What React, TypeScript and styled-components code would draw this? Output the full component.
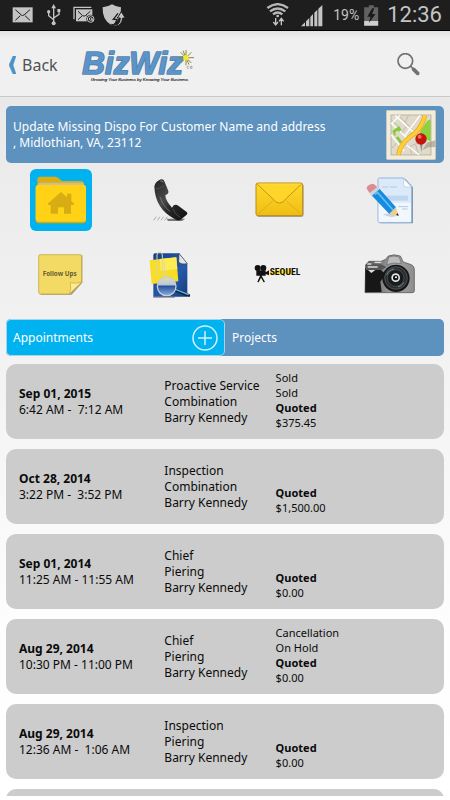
import React from "react";
import styled, { createGlobalStyle } from "styled-components";

const GlobalStyle = createGlobalStyle`
  * { box-sizing: border-box; }
  body { margin: 0; background: #fff; font-family: "Noto Sans", "Open Sans", sans-serif; color: #0a0a0a; }
  button { font: inherit; color: inherit; background: none; border: 0; padding: 0; margin: 0; cursor: pointer; }
  svg { display: block; }
`;

const Screen = styled.div`
  display: flex;
  flex-direction: column;
  height: 100vh;
  padding-bottom: 4px;
  overflow: hidden;
`;

const StatusBar = styled.header`
  display: flex;
  align-items: center;
  justify-content: space-between;
  flex: none;
  height: 31px;
  padding: 0 8px 0 12px;
  background: #1e1e1e;
  border-bottom: 1px solid #000;
  color: #c4c4c4;
  font-family: Roboto, sans-serif;
`;

const StatusGroup = styled.div`
  display: flex;
  align-items: center;
  gap: 5px;
`;

const Percent = styled.span`
  font-size: 14px;
  line-height: 20px;
  margin-left: 5px;
`;

const Clock = styled.span`
  font-size: 22px;
  line-height: 30px;
  margin-left: 3px;
`;

const AppBar = styled.nav`
  display: flex;
  align-items: center;
  flex: none;
  height: 66px;
  padding: 2px 30px 0 9px;
  background: linear-gradient(#e2e2e2, #f0f0f0 8px);
  border-bottom: 1px solid #c8c8c8;
`;

const BackButton = styled.button`
  display: flex;
  align-items: center;
  gap: 6px;
  font-size: 16px;
  line-height: 24px;
  color: #505050;
`;

const LogoBox = styled.div`
  flex: 1;
  padding-left: 23px;
`;

const Content = styled.main`
  display: flex;
  flex-direction: column;
  flex: 1;
  min-height: 0;
  padding: 9px 6px 0 6px;
  background: linear-gradient(#e9e9e9, #f0f0f0 28%, #f6f6f6 50%, #fdfdfd 75%, #fff);
`;

const AddressBar = styled.section`
  display: flex;
  align-items: center;
  justify-content: space-between;
  flex: none;
  height: 57px;
  padding: 0 8px 0 7px;
  border-radius: 5px;
  background: #5d91be;
  color: #fff;
`;

const Address = styled.p`
  margin: 0;
  font-size: 12px;
  line-height: 16px;
`;

const IconGrid = styled.div`
  display: grid;
  grid-template-columns: repeat(4, 1fr);
  grid-auto-rows: 74px;
  flex: none;
  padding-bottom: 8px;
`;

const GridCell = styled.div`
  display: flex;
  align-items: center;
  justify-content: center;
`;

const IconButton = styled.button<{ $active?: boolean }>`
  display: flex;
  align-items: center;
  justify-content: center;
  width: 62px;
  height: 62px;
  border-radius: 6px;
  background: ${(p) => (p.$active ? "#00b3f0" : "transparent")};
`;

const Tabs = styled.div`
  display: grid;
  grid-template-columns: 1fr 1fr;
  flex: none;
  height: 37px;
  border-radius: 5px;
  background: #5d91be;
  color: #fff;
  font-size: 12px;
`;

const Tab = styled.div<{ $active?: boolean }>`
  display: flex;
  align-items: center;
  padding: 0 6px;
  border: 1px solid ${(p) => (p.$active ? "#a4d4ea" : "transparent")};
  border-radius: 5px;
  background: ${(p) => (p.$active ? "#00b3f0" : "transparent")};
`;

const TabButton = styled.button`
  flex: 1;
  align-self: stretch;
  text-align: left;
`;

const List = styled.ul`
  flex: 1;
  min-height: 0;
  margin: 8px 0 0;
  padding: 0;
  list-style: none;
  overflow-y: auto;
  scrollbar-width: none;
`;

const Card = styled.li`
  display: grid;
  grid-template-columns: 145fr 111fr 168fr;
  align-items: center;
  height: 75px;
  margin-bottom: 10px;
  padding-left: 13px;
  border-radius: 10px;
  background: #ccc;
`;

const Lines = styled.div<{ $small?: boolean }>`
  font-size: ${(p) => (p.$small ? 11 : 12)}px;
  line-height: ${(p) => (p.$small ? 15 : 16)}px;
  padding-bottom: ${(p) => (p.$small ? 3 : 0)}px;
  white-space: pre;
`;

const Line = styled.div<{ $bold?: boolean }>`
  min-height: 15px;
  font-weight: ${(p) => (p.$bold ? 700 : 400)};
`;

const StatusLeftIcons = () => (
  <svg width="114" height="23" viewBox="34 14 342 69" aria-hidden="true">
    <rect x="36" y="24" width="60" height="45" fill="#c4c4c4" />
    <path d="M44 31l18 16q4 3 8 0l18-16M44 63l15-14M88 63L73 49" fill="none" stroke="#1e1e1e" strokeWidth="3" />
    <path d="M159 22v50M159 61l-15-12V38M159 56l16-11V36" stroke="#c4c4c4" strokeWidth="4" fill="none" />
    <path d="M159 14l7 13h-14z" fill="#c4c4c4" />
    <circle cx="159" cy="72" r="6" fill="#c4c4c4" />
    <circle cx="144" cy="37" r="5" fill="#c4c4c4" />
    <rect x="170" y="29" width="9" height="9" fill="#c4c4c4" />
    <path d="M220 60V24h52" fill="none" stroke="#c4c4c4" strokeWidth="4" />
    <rect x="226" y="30" width="49" height="36" fill="#c4c4c4" />
    <path d="M232 36l14 13q4 3 8 0l15-13M232 61l12-11M262 53l-5-4" fill="none" stroke="#1e1e1e" strokeWidth="3" />
    <circle cx="270" cy="59" r="13" fill="#1e1e1e" />
    <circle cx="270" cy="59" r="10" fill="none" stroke="#c4c4c4" strokeWidth="3" />
    <circle cx="270" cy="59" r="4" fill="none" stroke="#c4c4c4" strokeWidth="3" />
    <path d="M274 57v6h5" fill="none" stroke="#c4c4c4" strokeWidth="3" />
    <path d="M334 15q-13 8-28 9-2 39 27 54 30-15 28-54-15-1-27-9z" fill="#c4c4c4" />
    <path d="M338 76h11q10-4 10-20h-9l12-19 12 19h-8q-2 21-20 24-11 0-14-5z" fill="#c4c4c4" stroke="#1e1e1e" strokeWidth="3" />
    <path d="M352 42l-14 18h11l-6 14" fill="none" stroke="#1e1e1e" strokeWidth="4" />
  </svg>
);

const WifiSignal = () => (
  <svg width="57" height="24" viewBox="129 11 171 72" aria-hidden="true">
    <path d="M133 26q31-23 62 0M141 36q23-17 46 0M150 45q14-11 28 0" fill="none" stroke="#b8b8b8" strokeWidth="7" />
    <circle cx="164" cy="50" r="4" fill="#c4c4c4" />
    <path d="M158 56v20M151 68l7 9 7-9M175 78V58M168 66l7-9 7 9" fill="none" stroke="#c4c4c4" strokeWidth="4" />
    <path d="M234 81l12-12v12zM249 66l10-10v25h-10zM262 53l8-9v37h-8zM274 40l9-9v50h-9zM286 28l12-11v64h-12z" fill="#c4c4c4" />
  </svg>
);

const Battery = () => (
  <svg width="15" height="21" viewBox="420 14 44 63" aria-hidden="true">
    <path d="M434 15h15v6h13v55h-42V21h14z" fill="#626262" />
    <rect x="420" y="62" width="42" height="14" fill="#d0d0d0" />
    <path d="M444 24l-15 25h10l-5 19 20-27h-10l6-17z" fill="#1a1a1a" />
  </svg>
);

const Chevron = () => (
  <svg width="7" height="18" viewBox="0 0 7 18" aria-hidden="true">
    <path d="M7 0H4L0 9l4 9h3L4 9z" fill="#4b92c8" stroke="#4b92c8" strokeWidth="0.5" />
  </svg>
);

const Logo = () => (
  <svg width="118" height="36" viewBox="242 138 354 108" role="img" aria-label="BizWiz">
    <g fontFamily="Liberation Sans, Arial, sans-serif" fontStyle="italic">
      <text x="246" y="219" fontSize="94" fontWeight="700" fill="#5b94c8" stroke="#567fa8" strokeWidth="5" strokeLinejoin="round" paintOrder="stroke">BizWiz</text>
      <text x="272" y="240" fontSize="13" fill="#333" stroke="#333" strokeWidth="0.5">Growing Your Business by Knowing Your Business</text>
    </g>
    <path d="M557 147v46M535 170h46M541 154l32 32M573 154l-32 32M548 149l18 42" stroke="#8b8a35" strokeWidth="3" />
    <circle cx="557" cy="170" r="8" fill="#f8e52c" />
    <path d="M565 196q-5-2-5 3t5 3M570 196h5v6h-5z" fill="none" stroke="#888" strokeWidth="2" />
  </svg>
);

const SearchIcon = () => (
  <svg width="23" height="23" viewBox="518 164 69 69" aria-hidden="true">
    <circle cx="543" cy="188" r="22" fill="none" stroke="#717171" strokeWidth="5" />
    <path d="M559 204l7 7" stroke="#717171" strokeWidth="5" />
    <path d="M568 213l12 12" stroke="#717171" strokeWidth="11" strokeLinecap="round" />
  </svg>
);

const MapIcon = () => (
  <svg width="50" height="50" viewBox="483 30 150 150" aria-hidden="true">
    <rect x="484" y="31" width="148" height="148" rx="4" fill="#f1ecdc" stroke="#cdc6b0" strokeWidth="2" />
    <rect x="498" y="45" width="120" height="120" fill="#e0dacb" stroke="#a9a294" strokeWidth="2" />
    <path d="M617 58v66l-38-16q11-24 27-45z" fill="#8fd03f" />
    <g stroke="#c2bcaf" strokeWidth="3" fill="none">
      <path d="M520 46l28 28-20 28M550 46l-9 20 22 24M500 145l20-20 24 10M560 163l-5-24 35-15M580 163l-8-30M499 60l25 23" />
    </g>
    <path d="M499 70l55 52M510 46l65 59M499 105l38 48M525 46l-26 25M585 46l-45 61M545 135l37 29" stroke="#fff" strokeWidth="4" />
    <path d="M502 93l20-15 8 11-7 6-5-3-8 6 3 7-5 2zM512 113l7-4 13 17-7 3z" fill="#86cb35" />
    <path d="M520 164q6-32 34-52 35-22 46-66" fill="none" stroke="#e8a51c" strokeWidth="14" />
    <path d="M520 164q6-32 34-52 35-22 46-66" fill="none" stroke="#ffcf37" strokeWidth="10" />
    <path d="M592 150l14-22 25-7v20l-20 1z" fill="#8f8a76" opacity=".55" />
    <path d="M585 130h8l-4 27z" fill="#858b90" />
    <circle cx="588" cy="117" r="17" fill="#c3150e" />
    <circle cx="584" cy="110" r="6" fill="#f4705c" />
  </svg>
);

const FolderIcon = () => (
  <svg width="52" height="48" viewBox="104 229 156 144" aria-hidden="true">
    <path d="M111 252v-12q0-9 9-9h46q5 0 9 5l10 8h57q9 0 9 9v20H111z" fill="#d8ae12" />
    <rect x="113" y="249" width="138" height="20" rx="7" fill="#c9bca0" />
    <rect x="106" y="257" width="151" height="114" rx="9" fill="#d9aa0c" />
    <rect x="106" y="255" width="151" height="111" rx="9" fill="#ffd216" />
    <path d="M142 312l40-35 18 16v-11h13v22l9 8-3 4h-7v26h-21v-19h-18v19h-22v-26h-7z" fill="#d7ad13" />
  </svg>
);

const PhoneIcon = () => (
  <svg width="38" height="43" viewBox="458 240 114 129" aria-hidden="true">
    <defs>
      <linearGradient id="phoneBody" x1="0" y1="0" x2="1" y2="1">
        <stop offset="0" stopColor="#222" />
        <stop offset=".4" stopColor="#4a4a4a" />
        <stop offset=".6" stopColor="#262626" />
        <stop offset="1" stopColor="#111" />
      </linearGradient>
    </defs>
    <path d="M466 364l8-11M477 364l8-11M488 364l8-11M499 364l8-11" stroke="#aaa" strokeWidth="3" />
    <path d="M505 359h56l-10 7h-42z" fill="#777" />
    <path d="M468 262q3-15 20-21 8-1 10 6l12 29q2 9-9 12 0 16 20 38l5-7q7-4 15 2l23 17q6 5 0 10l-17 14q-9 5-17-1-60-31-62-99z" fill="url(#phoneBody)" />
    <path d="M473 269q10 2 24-10M524 329q2 14 22 26" fill="none" stroke="#5c5c5c" strokeWidth="2" />
    <path d="M485 293q8 28 30 44" stroke="#8a8a8a" strokeWidth="2" fill="none" />
    <path d="M486 246q6-2 8 4" stroke="#888" strokeWidth="3" fill="none" />
  </svg>
);

const MailIcon = () => (
  <svg width="49" height="36" viewBox="89 249 147 108" aria-hidden="true">
    <defs>
      <linearGradient id="mailBody" x1="0" y1="0" x2="0" y2="1">
        <stop offset="0" stopColor="#ffda29" />
        <stop offset="1" stopColor="#efbd15" />
      </linearGradient>
    </defs>
    <rect x="94" y="255" width="141" height="99" rx="7" fill="#a6a39a" />
    <rect x="92" y="252" width="140" height="98" rx="6" fill="url(#mailBody)" stroke="#b98d13" strokeWidth="3" />
    <path d="M98 345l44-39M227 345l-44-39" stroke="#d3a41a" strokeWidth="2" />
    <path d="M96 256l44 41q22 31 44 0l44-41" fill="#ffd52a" stroke="#c1941a" strokeWidth="3" />
    <path d="M98 255h128" stroke="#ffe04a" strokeWidth="2" />
  </svg>
);

const EditIcon = () => (
  <svg width="47" height="47" viewBox="420 233 141 141" aria-hidden="true">
    <path d="M463 239h76l22 25v108h-98z" fill="#8193a4" />
    <path d="M461 236h72l24 25v104q0 5-5 5h-91q-5 0-5-5V241q0-5 5-5z" fill="#dce9f9" stroke="#91b5dc" strokeWidth="3" />
    <path d="M458 310h97v57h-97z" fill="#f2f7fd" />
    <path d="M533 238v17q0 8 8 8h15z" fill="#fff" stroke="#aac4df" strokeWidth="2" />
    <path d="M469 263h18M491 263h22M517 322h29M528 329h17" stroke="#adc9e8" strokeWidth="3" />
    <rect x="468" y="289" width="78" height="15" fill="#bfd6ef" />
    <path d="M470 345q27 15 45 3l-12-8z" fill="#afbac5" opacity=".6" />
    <path d="M427 276l26-18 11 12-26 22z" fill="#cdd4da" />
    <path d="M422 268q0-11 15-14 6-2 11 4l5 6-22 17z" fill="#d98e96" />
    <path d="M438 289l23-20 49 55-20 20z" fill="#168bdf" />
    <path d="M447 286l7-7 47 53" fill="none" stroke="#61bcf4" strokeWidth="5" />
    <path d="M490 344l20-20 8 26z" fill="#edcf8b" />
    <path d="M510 346l6-5 2 9z" fill="#333" />
  </svg>
);

const FollowUpsIcon = () => (
  <svg width="45" height="41" viewBox="113 40 135 123" aria-hidden="true">
    <path d="M121 44h125v82l-32 36h-93z" fill="#a39c77" />
    <path d="M120 42h119q5 0 5 5v77l-37 36h-87q-5 0-5-5V47q0-5 5-5z" fill="#f2da65" stroke="#bd9d36" strokeWidth="2" />
    <path d="M207 160q7-16 3-34 18 4 34-2z" fill="#ffeb91" stroke="#c6a747" strokeWidth="2" />
    <text x="127" y="107" fontFamily="Noto Sans, sans-serif" fontSize="19" fontWeight="700" fill="#695d2d">Follow Ups</text>
  </svg>
);

const ResearchIcon = () => (
  <svg width="42" height="47" viewBox="450 34 126 141" aria-hidden="true">
    <defs>
      <linearGradient id="fileBlue" x1="0" y1="0" x2="1" y2="1">
        <stop offset="0" stopColor="#1a3f85" />
        <stop offset=".6" stopColor="#2659ab" />
        <stop offset="1" stopColor="#163a78" />
      </linearGradient>
      <linearGradient id="lens" x1="0" y1="0" x2="0" y2="1">
        <stop offset="0" stopColor="#e2dfa6" />
        <stop offset=".4" stopColor="#b9c9dc" />
        <stop offset=".5" stopColor="#2a5399" />
        <stop offset="1" stopColor="#86b0e4" />
      </linearGradient>
    </defs>
    <path d="M463 46q0-5 5-5h72l25 32v98H463z" fill="url(#fileBlue)" />
    <path d="M540 41l-1 27q8 8 26 4z" fill="#dfe5ee" stroke="#3a3a3a" strokeWidth="2" />
    <path d="M452 62l80-9 6 72-80 8z" fill="#f7dd28" />
    <path d="M482 58l50-5 3 35-50 6z" fill="#ffec54" />
    <path d="M474 108V46q0-9 8-9t8 9v60M497 65v42" stroke="#d8d6ac" strokeWidth="3" fill="none" />
    <path d="M529 151l40 16" stroke="#10243f" strokeWidth="9" strokeLinecap="round" />
    <path d="M529 149l40 16" stroke="#67b9d8" strokeWidth="4" />
    <circle cx="503" cy="140" r="28" fill="url(#lens)" stroke="#c5ced9" strokeWidth="4" />
    <path d="M463 172h65" stroke="#5e596d" strokeWidth="3" />
  </svg>
);

const SequelIcon = () => (
  <svg width="51" height="20" viewBox="90 80 153 60" aria-hidden="true">
    <path d="M137 102q40-9 70-7v18q-36-5-70 1z" fill="#ffe339" />
    <circle cx="101" cy="92" r="9" fill="#111" />
    <circle cx="118" cy="92" r="9" fill="#111" />
    <path d="M97 99h28v16H97zM125 105l10-6v15l-10-4zM108 115h5l10 19-4 1-8-14-7 14-4-1z" fill="#111" />
    <text x="137" y="112" fontFamily="Liberation Sans Narrow, Roboto Condensed, Roboto, sans-serif" fontSize="29" fontWeight="700" fill="#111">SEQUEL</text>
  </svg>
);

const CameraIcon = () => (
  <svg width="51" height="40" viewBox="415 48 153 120" aria-hidden="true">
    <defs>
      <linearGradient id="cameraBody" x1="0" y1="0" x2="1" y2="0">
        <stop offset="0" stopColor="#555" />
        <stop offset=".6" stopColor="#a4a4a4" />
        <stop offset="1" stopColor="#8e8e8e" />
      </linearGradient>
    </defs>
    <path d="M420 80l10-10h36l14-6 8-10q16-7 36 0l9 18 21 7q13 4 12 19v61q0 5-7 5H418z" fill="url(#cameraBody)" stroke="#4a4a4a" strokeWidth="2" />
    <path d="M419 90h39l22 18-16 23 4 31h-49z" fill="#171717" />
    <path d="M421 79h45l16 8-15 9h-46z" fill="#555" />
    <path d="M425 78h12M447 73h20M426 87h30" stroke="#ddd" strokeWidth="4" />
    <path d="M427 96h22l-12 9z" fill="#ddd" />
    <path d="M489 57q16-6 32 0l6 20q-23-5-44 3z" fill="#bcbcbc" stroke="#666" strokeWidth="2" />
    <circle cx="511" cy="121" r="41" fill="#161616" />
    <circle cx="511" cy="120" r="34" fill="#2c3031" stroke="#5f6768" strokeWidth="2" />
    <circle cx="510" cy="120" r="25" fill="#171c1e" stroke="#51595b" strokeWidth="2" />
    <circle cx="510" cy="119" r="13" fill="#e4e4e4" />
    <circle cx="510" cy="119" r="8" fill="#111" />
    <circle cx="511" cy="118" r="3" fill="#fff" />
    <path d="M483 111q7-16 22-18M535 133q-7 12-18 14" fill="none" stroke="#75898c" strokeWidth="3" />
  </svg>
);

const PlusCircle = () => (
  <svg width="26" height="26" viewBox="0 0 26 26" aria-hidden="true">
    <circle cx="13" cy="13" r="12" fill="none" stroke="#d0f2ff" strokeWidth="1.5" />
    <path d="M13 6v14M6 13h14" stroke="#d0f2ff" strokeWidth="1.5" />
  </svg>
);

const actions = [
  { label: "Home", Icon: FolderIcon, active: true },
  { label: "Call", Icon: PhoneIcon },
  { label: "Email", Icon: MailIcon },
  { label: "Edit", Icon: EditIcon },
  { label: "Follow Ups", Icon: FollowUpsIcon },
  { label: "Documents", Icon: ResearchIcon },
  { label: "Sequel", Icon: SequelIcon },
  { label: "Camera", Icon: CameraIcon },
];

const appointments = [
  { date: "Sep 01, 2015", time: "6:42 AM -  7:12 AM", type: "Proactive Service", kind: "Combination", status: ["Sold", "Sold"], amount: "$375.45" },
  { date: "Oct 28, 2014", time: "3:22 PM -  3:52 PM", type: "Inspection", kind: "Combination", status: ["", ""], amount: "$1,500.00" },
  { date: "Sep 01, 2014", time: "11:25 AM - 11:55 AM", type: "Chief", kind: "Piering", status: ["", ""], amount: "$0.00" },
  { date: "Aug 29, 2014", time: "10:30 PM - 11:00 PM", type: "Chief", kind: "Piering", status: ["Cancellation", "On Hold"], amount: "$0.00" },
  { date: "Aug 29, 2014", time: "12:36 AM -  1:06 AM", type: "Inspection", kind: "Piering", status: ["", ""], amount: "$0.00" },
];

export default function App() {
  return (
    <Screen>
      <GlobalStyle />
      <StatusBar>
        <StatusLeftIcons />
        <StatusGroup>
          <WifiSignal />
          <Percent>19%</Percent>
          <Battery />
          <Clock>12:36</Clock>
        </StatusGroup>
      </StatusBar>
      <AppBar>
        <BackButton type="button"><Chevron />Back</BackButton>
        <LogoBox><Logo /></LogoBox>
        <button type="button" aria-label="Search"><SearchIcon /></button>
      </AppBar>
      <Content>
        <AddressBar>
          <Address>Update Missing Dispo For Customer Name and address<br />, Midlothian, VA, 23112</Address>
          <button type="button" aria-label="Open map"><MapIcon /></button>
        </AddressBar>
        <IconGrid>
          {actions.map(({ label, Icon, active }) => (
            <GridCell key={label}>
              <IconButton type="button" aria-label={label} $active={active}><Icon /></IconButton>
            </GridCell>
          ))}
        </IconGrid>
        <Tabs>
          <Tab $active>
            <TabButton type="button">Appointments</TabButton>
            <button type="button" aria-label="Add appointment"><PlusCircle /></button>
          </Tab>
          <Tab>
            <TabButton type="button">Projects</TabButton>
          </Tab>
        </Tabs>
        <List>
          {appointments.map((a) => (
            <Card key={a.date + a.time}>
              <Lines>
                <Line $bold>{a.date}</Line>
                <Line>{a.time}</Line>
              </Lines>
              <Lines>
                <Line>{a.type}</Line>
                <Line>{a.kind}</Line>
                <Line>Barry Kennedy</Line>
              </Lines>
              <Lines $small>
                <Line>{a.status[0]}</Line>
                <Line>{a.status[1]}</Line>
                <Line $bold>Quoted</Line>
                <Line>{a.amount}</Line>
              </Lines>
            </Card>
          ))}
          <Card aria-hidden="true" />
        </List>
      </Content>
    </Screen>
  );
}
